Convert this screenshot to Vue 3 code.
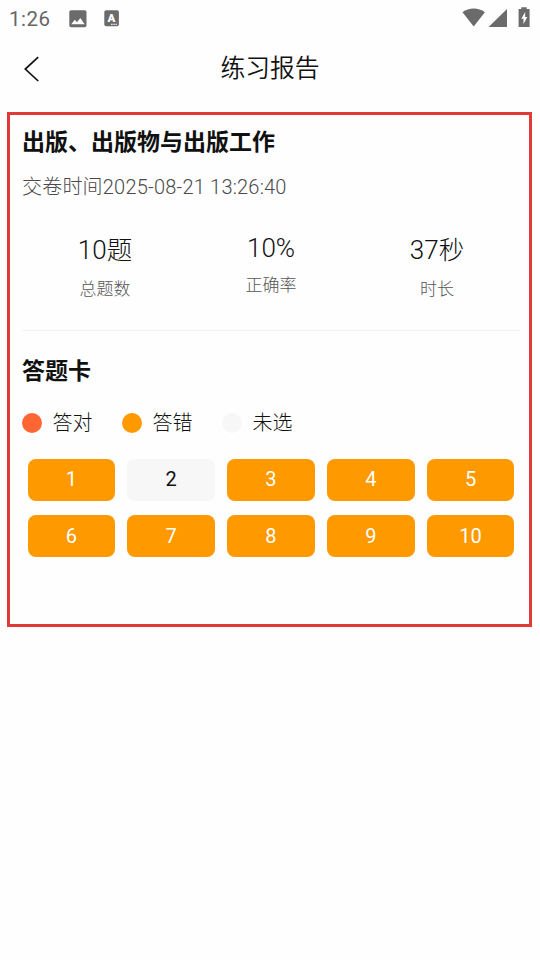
<template>
    <div class="page">
        <div class="status-bar">
            <span class="clock">1:26</span>
            <svg class="icon-image" width="18" height="18" viewBox="0 0 18 18">
                <rect x="0.3" y="0.3" width="17.2" height="17" rx="1.8" fill="#6b6b6b" />
                <path d="M2.2 14.2 L5.8 9.8 L8 12.3 L11.3 8 L15.6 14.2 Z" fill="#fff" />
            </svg>
            <svg class="icon-lang" width="16" height="17" viewBox="0 0 16 17">
                <rect x="0.3" y="0.3" width="14.6" height="16" rx="1.8" fill="#6b6b6b" />
                <text x="7.3" y="12" text-anchor="middle">A</text>
                <path d="M7 14.3 H13.5" stroke="#fff" stroke-width="1" stroke-dasharray="1.6 0.6" />
            </svg>
            <svg class="icon-signal" width="72" height="24" viewBox="0 0 72 24">
                <path d="M0.5 5.2 C7 0.3 16.4 0.3 22.9 5.2 L11.7 19.6 Z" fill="#6b6b6b" />
                <path d="M26.6 20 L45 2 V20 Z" fill="#6b6b6b" />
                <path d="M59.3 0.2 H64.7 V2 H67.6 V20 H56.6 V2 H59.3 Z" fill="#6b6b6b" />
                <path d="M63.2 5 L59.3 11.7 H61.5 V17 L65.3 9.9 H63.1 Z" fill="#fff" />
            </svg>
        </div>

        <div class="nav-bar">
            <svg class="back" width="18" height="28" viewBox="0 0 18 28">
                <path d="M15.2 2.2 L2.3 14 L15.2 26" fill="none" stroke="#111" stroke-width="1.7" />
            </svg>
            <h1>练习报告</h1>
        </div>

        <div class="report">
            <h2>出版、出版物与出版工作</h2>
            <p class="time">交卷时间2025-08-21 13:26:40</p>

            <div class="stats">
                <div v-for="item in stats" :key="item.label" class="stat" :class="{ compact: !item.unit }">
                    <span class="value">{{ item.value }}<small v-if="item.unit">{{ item.unit }}</small></span>
                    <span class="label">{{ item.label }}</span>
                </div>
            </div>

            <h2 class="card-title">答题卡</h2>
            <div class="legend">
                <div v-for="item in legend" :key="item.type" class="legend-item">
                    <i class="dot" :class="item.type"></i>
                    <span>{{ item.text }}</span>
                </div>
            </div>

            <div class="answers">
                <button v-for="item in answers" :key="item.no" :class="item.type">{{ item.no }}</button>
            </div>
        </div>
    </div>
</template>

<script setup>
import { ref } from 'vue';

const stats = ref([
    { value: '10', unit: '题', label: '总题数' },
    { value: '10%', label: '正确率' },
    { value: '37', unit: '秒', label: '时长' },
]);

const legend = [
    { type: 'right', text: '答对' },
    { type: 'wrong', text: '答错' },
    { type: 'empty', text: '未选' },
];

const answers = ref(
    Array.from({ length: 10 }, (_, i) => ({
        no: i + 1,
        type: i === 1 ? 'empty' : 'wrong',
    }))
);
</script>

<style>
body {
    background: #fefefe;
}
</style>

<style scoped>
.page {
    box-sizing: border-box;
    width: 540px;
    height: 960px;
    overflow: hidden;
    background: #fefefe;
    color: #111;
    font-family: Roboto, "Noto Sans CJK SC", sans-serif;
    font-weight: 300;
}

h1, h2, p {
    margin: 0;
}

.status-bar {
    display: flex;
    height: 37px;
    padding-left: 9px;
    color: #666;

    .clock {
        width: 60px;
        font-size: 20.5px;
        font-weight: 400;
        line-height: 38px;
        letter-spacing: .5px;
    }

    .icon-image {
        margin-top: 10px;
    }

    .icon-lang {
        margin: 10px 0 0 17px;

        text {
            fill: #fff;
            font-size: 11.5px;
            font-weight: 900;
        }
    }

    .icon-signal {
        margin: 7px 6px 0 auto;
    }
}

.nav-bar {
    display: grid;
    grid-template-columns: 60px 1fr 60px;
    align-items: center;
    height: 63px;

    .back {
        margin: 1px 0 0 23px;
    }

    h1 {
        font-size: 24.8px;
        font-weight: 350;
        line-height: 36px;
        text-align: center;
    }
}

.report {
    box-sizing: border-box;
    width: 525px;
    height: 515px;
    margin: 12px 0 0 7px;
    padding: 13px 9px 0 12px;
    border: 3px solid #e03a3a;
}

h2 {
    font-size: 23px;
    font-weight: 700;
    line-height: 30px;
}

.time {
    margin-top: 16px;
    color: #4a4a4a;
    font-size: 20px;
    line-height: 26px;
    letter-spacing: .2px;
}

.stats {
    display: grid;
    grid-template-columns: repeat(3, 1fr);
    height: 99px;
    padding-top: 31px;
    border-bottom: 1px solid #f2f2f2;
}

.stat {
    display: flex;
    flex-direction: column;
    align-items: center;

    .value {
        font-size: 26px;
        font-weight: 350;
        line-height: 38px;
    }

    small {
        font-size: 25.5px;
        font-weight: 300;
        line-height: 1;
    }

    .label {
        margin-top: 7px;
        color: #555;
        font-size: 17px;
        line-height: 26px;
    }

    &.compact .value {
        line-height: 34px;
    }
}

.card-title {
    margin-top: 26px;
}

.legend {
    display: flex;
    gap: 29.5px;
    margin-top: 21px;
}

.legend-item {
    display: flex;
    align-items: center;
    font-size: 20px;
    line-height: 30px;

    .dot {
        width: 20px;
        height: 20px;
        margin-right: 10.5px;
        border-radius: 50%;
    }
}

.right {
    background: #ff6633;
}

.wrong {
    background: #ff9900;
    color: #fff;
}

.empty {
    background: #f7f7f7;
    color: #111;
}

.answers {
    display: grid;
    grid-template-columns: repeat(5, 1fr);
    gap: 14px 12.2px;
    margin-top: 21px;
    padding: 0 5.6px;

    button {
        height: 42px;
        padding: 0;
        border: none;
        border-radius: 8px;
        font-family: inherit;
        font-size: 20px;
        font-weight: 400;

        &:nth-child(-n + 5) {
            padding-bottom: 2px;
        }
    }
}
</style>
